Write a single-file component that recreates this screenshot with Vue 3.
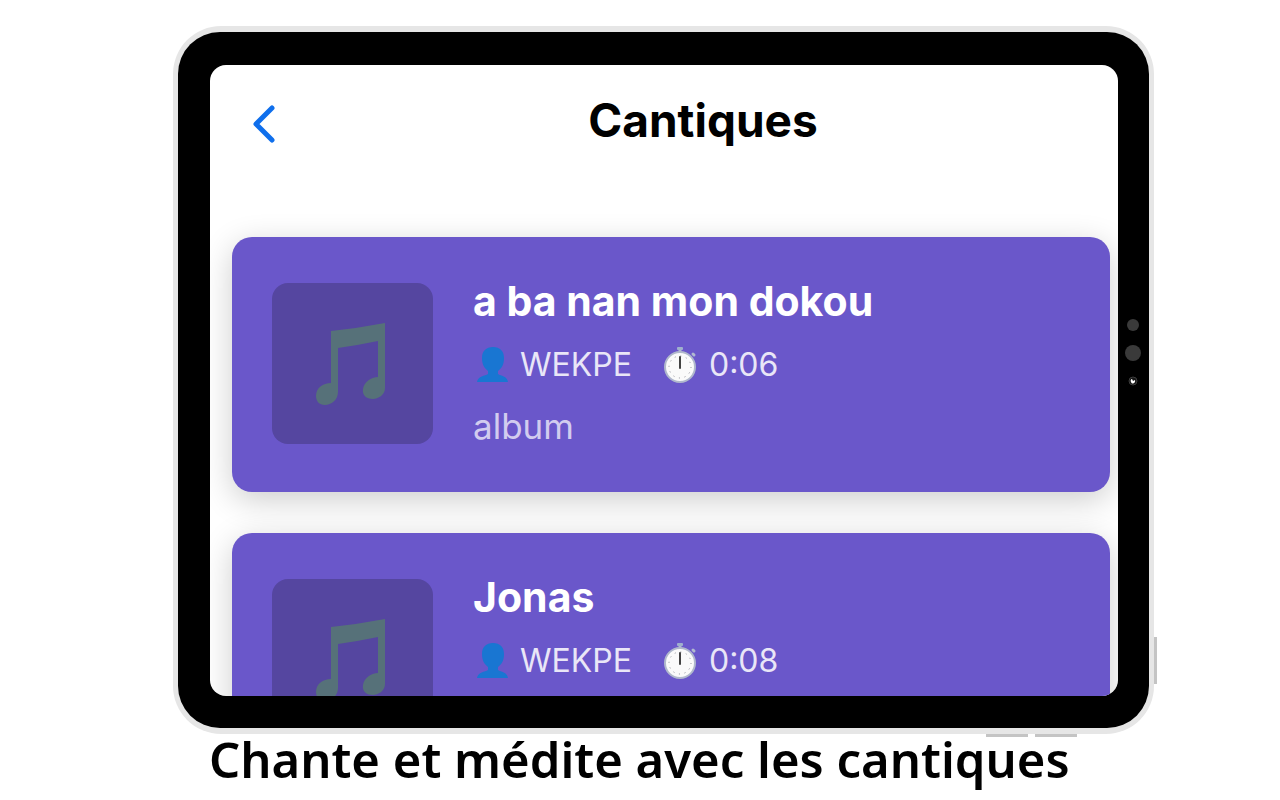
<template>
  <main class="page">
    <div class="tablet">
      <span class="side-key power-key"></span>
      <span class="side-key volume-up"></span>
      <span class="side-key volume-down"></span>

      <div class="bezel">
        <section class="screen">
          <!-- Header -->
          <header class="header">
            <button class="back-btn" type="button" aria-label="Retour">
              <svg viewBox="0 0 24 40" width="24" height="40">
                <path d="M20 4L4 20L20 36" />
              </svg>
            </button>
            <h1 class="header-title">Cantiques</h1>
          </header>

          <!-- Songs -->
          <ul class="song-list">
            <li v-for="song in songs" :key="song.title" class="song-card">
              <div class="cover">
                <svg viewBox="0 0 160 160" width="160" height="160">
                  <path d="M59 48Q87 45 113 40V105C113 112 106 116 101 116C94 116 90 112 91 106C92 99 99 94 106 94V58Q87 62 66 65V109C66 117 59 122 53 122C47 122 44 118 44 113C44 105 51 100 59 100Z" />
                </svg>
              </div>

              <div class="song-info">
                <h2 class="song-title">{{ song.title }}</h2>
                <div class="song-meta">
                  <span class="meta-item">
                    <svg class="meta-icon" viewBox="0 0 36 36" width="36" height="36">
                      <path fill="#1976d2" d="M20 0C13 0 9 4 9 11C9 17 11 21 15 24V27C12 29 5 29 4 35H35C34 29 28 29 25 27V24C29 21 31 17 31 11C31 4 27 0 20 0Z" />
                    </svg>
                    {{ song.artist }}
                  </span>
                  <span class="meta-item">
                    <svg class="meta-icon" viewBox="0 0 36 36" width="36" height="36">
                      <path stroke="#b0b8d0" stroke-width="3" stroke-linecap="round" d="M18 2V6M31 7L32 8" />
                      <rect x="15" y="0" width="6" height="3" rx="1" fill="#9fb0cc" />
                      <circle cx="18" cy="20" r="15" fill="#fafafa" stroke="#b0b8cc" stroke-width="2" />
                      <circle cx="18" cy="20" r="11" fill="none" stroke="#8d8d96" stroke-width="1" stroke-dasharray="1 4.76" />
                      <path stroke="#424242" stroke-width="2" stroke-linecap="round" d="M18 10V21" />
                    </svg>
                    {{ song.duration }}
                  </span>
                </div>
                <p v-if="song.album" class="song-album">{{ song.album }}</p>
              </div>
            </li>
          </ul>
        </section>

        <!-- Camera and sensors -->
        <svg class="sensors" viewBox="0 0 20 70" width="20" height="70">
          <circle cx="10" cy="8" r="6" fill="#3a3a3a" />
          <circle cx="10" cy="36" r="8" fill="#3a3a3a" />
          <circle cx="10" cy="64" r="4" fill="#161616" stroke="#3c3c3c" />
          <path fill="#fff" d="M9 62L10 64L12 63C13 66 9 68 8 65C7 64 8 62 9 62Z" />
        </svg>
      </div>
    </div>

    <p class="caption">Chante et médite avec les cantiques</p>
  </main>
</template>

<script setup>
import { ref } from 'vue'

const songs = ref([
  { title: 'a ba nan mon dokou', artist: 'WEKPE', duration: '0:06', album: 'album' },
  { title: 'Jonas', artist: 'WEKPE', duration: '0:08', album: '' }
])
</script>

<style>
body {
  margin: 0;
  background: #fff;
}
</style>

<style scoped>
.page {
  box-sizing: border-box;
  height: 100vh;
  padding: 26px 126px 0 173px;
  display: flex;
  flex-direction: column;
  overflow: hidden;
  font-family: Inter, "Liberation Sans", sans-serif;
}

/* Tablet */
.tablet {
  position: relative;
  box-sizing: border-box;
  flex: 1;
  min-height: 0;
  padding: 6px 5px;
  display: flex;
  background: #e6e6e6;
  border-radius: 48px;
}

.bezel {
  position: relative;
  box-sizing: border-box;
  flex: 1;
  min-width: 0;
  padding: 33px 31px 32px 32px;
  display: flex;
  background: #000;
  border-radius: 42px;
}

.side-key {
  position: absolute;
  background: #c4c4c4;
}

.power-key {
  right: -3px;
  bottom: 50px;
  width: 3px;
  height: 47px;
}

.volume-up,
.volume-down {
  bottom: -3px;
  width: 42px;
  height: 3px;
}

.volume-up {
  right: 126px;
}

.volume-down {
  right: 77px;
}

.sensors {
  position: absolute;
  right: 6px;
  top: 285px;
}

/* Screen */
.screen {
  flex: 1;
  min-width: 0;
  overflow: hidden;
  background: #fff;
  border-radius: 16px;
}

.header {
  display: flex;
  align-items: center;
  height: 110px;
}

.back-btn {
  width: 78px;
  height: 80px;
  padding: 8px 0 0 30px;
  display: flex;
  align-items: center;
  justify-content: center;
  border: none;
  background: none;
  cursor: pointer;
}

.back-btn svg {
  stroke: #0f6fec;
  fill: none;
  stroke-width: 5;
  stroke-linecap: round;
  stroke-linejoin: round;
}

.header-title {
  flex: 1;
  margin: 0;
  font-size: 46px;
  line-height: 56px;
  font-weight: 700;
  text-align: center;
  color: #000;
}

/* Songs */
.song-list {
  margin: 0;
  padding: 62px 8px 40px 22px;
  display: flex;
  flex-direction: column;
  gap: 41px;
  list-style: none;
}

.song-card {
  display: flex;
  align-items: flex-start;
  gap: 40px;
  padding: 40px 40px 42px;
  background: #6a57ca;
  border-radius: 20px;
  box-shadow: 0 8px 32px rgba(0, 0, 0, 0.2);
}

.cover {
  flex: none;
  width: 161px;
  height: 161px;
  margin-top: 6px;
  background: #5546a0;
  border-radius: 16px;
}

.cover svg {
  display: block;
  fill: #567179;
}

.song-info {
  min-width: 0;
}

.song-title {
  margin: 0 0 16px;
  font-size: 41px;
  line-height: 48px;
  font-weight: 700;
  color: #fff;
}

.song-meta {
  display: flex;
  gap: 30px;
  margin-bottom: 13px;
  font-size: 32px;
  line-height: 48px;
  color: #e9e6f7;
}

.meta-item {
  display: flex;
  align-items: center;
  gap: 11px;
}

.song-album {
  margin: 0;
  font-size: 35px;
  line-height: 48px;
  color: #d2ccef;
}

/* Caption */
.caption {
  margin: 0;
  padding-left: 36px;
  font-family: "Noto Sans", "Open Sans", sans-serif;
  font-size: 49px;
  line-height: 50px;
  height: 66px;
  font-weight: 600;
  white-space: nowrap;
  color: #000;
}
</style>
